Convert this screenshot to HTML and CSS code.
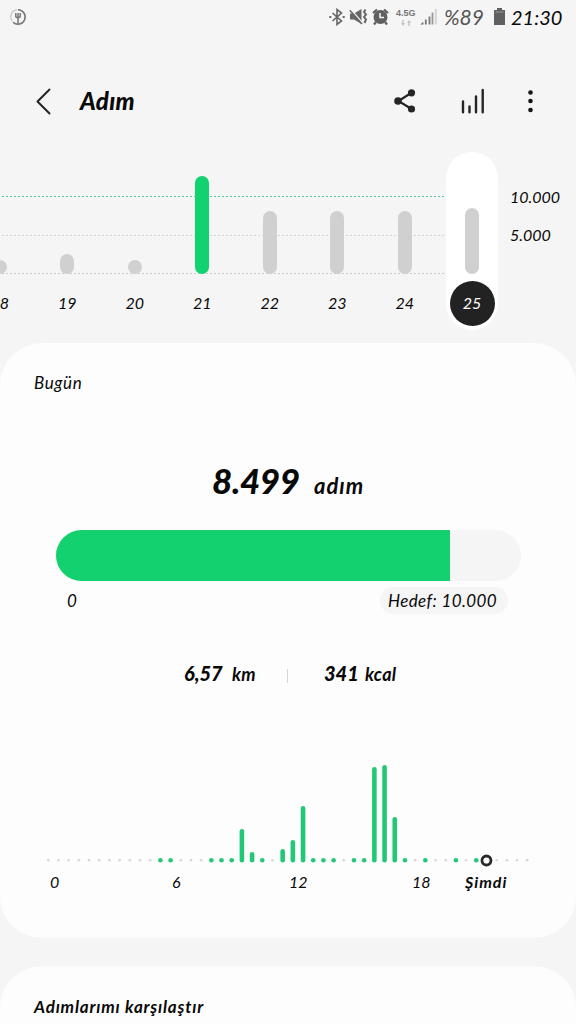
FILE: index.html
```html
<!DOCTYPE html>
<html lang="tr">
<head>
  <meta charset="utf-8">
  <title>Adım</title>
  <link rel="stylesheet" href="styles.css">
</head>
<body>
  <div class="status-bar">
    <svg class="fork-icon" width="18" height="18" viewBox="0 0 18 18" fill="none">
      <path d="M8 1.800A7.200 7.200 0 0 0 3 13" stroke="#ccc" stroke-width="1.500"/>
      <path d="M9 1.800A7.200 7.200 0 1 1 4 14.200" stroke="#777" stroke-width="1.500"/>
      <path d="M6.800 5v3.500q0 1.200 2.200 1.200t2.200-1.200V5M9 5v11" stroke="#777" stroke-width="1.500"/>
    </svg>
    <div class="status-right">
      <svg class="bluetooth" width="16" height="18" viewBox="0 0 16 18" fill="none" stroke="#666" stroke-width="1.600">
        <path d="M3.500 5l9 8L8 16.500v-15L12.500 5l-9 8"/>
        <path d="M.3 9h2M13.700 9h2" stroke-width="2"/>
      </svg>
      <svg class="mute" width="19" height="18" viewBox="0 0 19 18">
        <path d="M1 5.500h4L12.500 1v15L5 11.500H1z" fill="#666"/>
        <path d="M2 1.500L14 15.500" stroke="#f5f5f5" stroke-width="1.400"/>
        <path d="M.8 2.300L13 16" stroke="#666" stroke-width="1.500"/>
        <path d="M16.500 1.500l-1.500 2.500 2 2.500-2 2.500 2 2.500-1.500 3.500" fill="none" stroke="#666" stroke-width="2"/>
      </svg>
      <svg class="alarm" width="17" height="18" viewBox="0 0 17 18">
        <circle cx="8.500" cy="9" r="7" fill="#606060"/>
        <path d="M1 5L5 1.500M16 5l-4-3.500M4 14l-2 2.500M13 14l2 2.500" stroke="#606060" stroke-width="2.200"/>
        <path d="M8 5v4.500h4" fill="none" stroke="#f5f5f5" stroke-width="1.500"/>
      </svg>
      <div class="network">
        <span>4.5G</span>
        <svg width="10" height="6" viewBox="0 0 10 6"><path d="M0 3h4L2 6zM6 3h4L8 0zM1.300 0h1.400v3H1.300zM7.300 3h1.400v3H7.300z" fill="#c4c4c4"/></svg>
      </div>
      <svg class="signal" width="17" height="18" viewBox="0 0 17 18" stroke-width="1.800">
        <path d="M.5 16.500h2.800v-2.800z" fill="#666"/>
        <path d="M5.800 16.500v-5M9.500 16.500V8.500" stroke="#777"/>
        <path d="M12.500 16.500V4.500" stroke="#999"/>
        <path d="M15.800 16.500V1" stroke="#d2d2d2"/>
      </svg>
      <span class="battery-text">%89</span>
      <svg class="battery" width="11" height="17" viewBox="0 0 11 17">
        <path d="M3 0h5v2h3v15H0V2h3z" fill="#606060"/>
        <path d="M1.500 4h8" stroke="#999"/>
      </svg>
      <span class="clock">21:30</span>
    </div>
  </div>

  <header class="header">
    <svg class="back" width="15" height="27" viewBox="0 0 15 27" fill="none" stroke="#222" stroke-width="1.900" stroke-linecap="round" stroke-linejoin="round">
      <path d="M13.500 1.500L1.500 13.500l12 12"/>
    </svg>
    <h1>Adım</h1>
    <svg class="share" width="22" height="24" viewBox="0 0 22 24" fill="#252525">
      <path d="M17.500 3.800L4.500 12l13 8" fill="none" stroke="#252525" stroke-width="2.200"/>
      <circle cx="17.500" cy="3.800" r="3.600"/><circle cx="4" cy="12" r="3.800"/><circle cx="17.500" cy="20" r="3.600"/>
    </svg>
    <svg class="stats" width="25" height="26" viewBox="0 0 25 26" stroke="#252525" stroke-width="2.400" stroke-linecap="round">
      <path d="M2 13.500v10.800M8.500 18.500v5.800M15 8.500v15.800M21.700 2v22.300"/>
    </svg>
    <svg class="more" width="6" height="24" viewBox="0 0 6 24" fill="#151515">
      <circle cx="2.500" cy="3.500" r="2.300"/><circle cx="2.500" cy="12" r="2.300"/><circle cx="2.500" cy="21" r="2.300"/>
    </svg>
  </header>

  <section class="week">
    <div class="days" id="days"></div>
    <div class="scale"><span>10.000</span><span>5.000</span></div>
  </section>

  <section class="card today">
    <h2>Bugün</h2>
    <div class="total"><strong>8.499</strong><span>adım</span></div>
    <div class="progress"><div class="progress-fill"></div></div>
    <div class="goal-row"><span class="zero">0</span><span class="goal">Hedef: 10.000</span></div>
    <div class="details">
      <div class="distance"><b>6,57</b><span>km</span></div>
      <div class="divider"></div>
      <div class="calories"><b>341</b><span>kcal</span></div>
    </div>
    <div class="hours" id="hours"></div>
    <div class="hour-labels"><span>0</span><span>6</span><span>12</span><span>18</span><b>Şimdi</b></div>
  </section>

  <section class="card compare">
    <h2>Adımlarımı karşılaştır</h2>
  </section>

  <script>
    // day, bar height in px
    const days = [[18, 14], [19, 20], [20, 14], [21, 98], [22, 63], [23, 63], [24, 63], [25, 66]];
    document.getElementById('days').innerHTML = days.map(([day, height]) => {
      const state = day === 21 ? ' reached' : day === 25 ? ' selected' : '';
      return `<div class="day${state}"><div class="day-plot"><div class="day-bar" style="height:${height}px"></div></div><span class="day-label">${day}</span></div>`;
    }).join('');

    // one slot per half hour
    const steps = {
      11: 4, 12: 4, 16: 4, 17: 4, 18: 4, 19: 33, 20: 10, 21: 4, 23: 13, 24: 22, 25: 56,
      26: 4, 27: 4, 28: 4, 30: 4, 31: 4, 32: 95, 33: 97, 34: 45, 35: 4, 37: 4, 40: 4, 42: 4
    };
    const now = 43;
    let slots = '';
    for (let i = 0; i < 48; i++) {
      const x = 5.3 + i * 10.19;
      if (i === now) {
        slots += `<circle class="now" cx="${x}" cy="95.5" r="4.5"/>`;
      } else if (steps[i]) {
        slots += `<rect class="hour-bar" x="${x - 2.3}" y="${97 - steps[i]}" width="4.6" height="${steps[i] + 0.6}" rx="2.3"/>`;
      } else {
        slots += `<circle class="empty" cx="${x}" cy="95.2" r="1.3"/>`;
      }
    }
    document.getElementById('hours').innerHTML = `<svg width="490" height="102">${slots}</svg>`;
  </script>
</body>
</html>
```
FILE: styles.css
```css
* {
  box-sizing: border-box;
}
body {
  margin: 0;
  width: 576px;
  height: 1024px;
  overflow: hidden;
  background-color: #f5f5f5;
  color: #090909;
  font-family: Lato, "Open Sans", sans-serif;
  font-style: italic;
  font-variant-ligatures: none;
}
h1, h2 {
  margin: 0;
}
svg {
  display: block;
  flex: none;
}
.status-bar {
  display: flex;
  justify-content: space-between;
  height: 34px;
  padding: 8px 13px 0 9px;
}
.status-right {
  display: flex;
  height: 18px;
}
.bluetooth {
  margin-left: -2px;
}
.mute {
  margin-left: 4px;
}
.alarm {
  margin-left: 4px;
}
.network {
  width: 20px;
  margin-left: 7px;
  font: bold 9px/11px "Liberation Sans", sans-serif;
  color: #777;
}
.network svg {
  margin: 1px 0 0 5px;
}
.signal {
  margin-left: 4px;
}
.battery-text {
  width: 41px;
  margin-left: 7px;
  font-size: 21px;
  line-height: 18px;
  color: #555;
}
.battery {
  margin-left: 9px;
}
.clock {
  width: 52px;
  margin-left: 6px;
  font-size: 20px;
  line-height: 18px;
  white-space: nowrap;
}
.header {
  display: flex;
  align-items: center;
  height: 60px;
  margin-top: 37px;
  padding-left: 36px;
}
.header h1 {
  width: 314px;
  margin: -1px 0 0 29px;
  font-size: 24px;
  line-height: 28px;
  font-weight: 900;
  letter-spacing: 0.3px;
}
.stats {
  margin-left: 45px;
}
.more {
  margin-left: 42px;
}
.week {
  display: flex;
  height: 178px;
  margin-top: 21px;
}
.days {
  display: flex;
  width: 506px;
  margin-left: -34px;
  background-image:
    repeating-linear-gradient(90deg, #5cc698 0 2px, transparent 2px 4px),
    repeating-linear-gradient(90deg, #d3d3d3 0 2px, transparent 2px 4px),
    repeating-linear-gradient(90deg, #c4cec9 0 2px, transparent 2px 4px);
  background-size: 480px 1px;
  background-position: 0 44px, 0 83px, 0 121px;
  background-repeat: no-repeat;
}
.day {
  flex: none;
  width: 67.5px;
  display: flex;
  flex-direction: column;
  align-items: center;
}
.day-plot {
  display: flex;
  align-items: flex-end;
  height: 122px;
}
.day-bar {
  width: 14px;
  border-radius: 7px;
  background-color: #d0d0d0;
}
.reached .day-bar {
  background-color: #11d170;
}
.day-label {
  width: 45px;
  height: 45px;
  margin-top: 7px;
  border-radius: 50%;
  font-size: 16px;
  line-height: 44px;
  text-align: center;
}
.selected {
  width: 52px;
  margin-left: 7.5px;
  border-radius: 26px;
  background-color: #fff;
}
.selected .day-label {
  background-color: #222;
  color: #fff;
}
.scale {
  display: flex;
  flex-direction: column;
  gap: 18px;
  width: 60px;
  margin-left: 38px;
  padding-top: 35px;
  font-size: 16px;
  line-height: 20px;
}
.card {
  border-radius: 42px;
  background-color: #fdfdfd;
}
.card h2 {
  padding-left: 34px;
  line-height: 22px;
}
.today {
  height: 595px;
  margin-top: 13px;
  padding-top: 29px;
}
.today h2 {
  font-size: 17px;
  font-weight: 400;
  letter-spacing: 0.6px;
}
.total {
  display: flex;
  align-items: baseline;
  height: 54px;
  margin-top: 59px;
  padding-left: 212px;
}
.total strong {
  width: 102px;
  font-size: 35px;
  line-height: 54px;
  font-weight: 900;
  letter-spacing: -0.4px;
}
.total span {
  font-size: 22px;
  font-weight: 700;
  letter-spacing: 1px;
}
.progress {
  width: 465px;
  height: 51px;
  margin: 23px 0 0 56px;
  overflow: hidden;
  border-radius: 26px;
  background-color: #f5f5f5;
}
.progress-fill {
  width: 394px;
  height: 100%;
  background-color: #12d16e;
}
.goal-row {
  display: flex;
  justify-content: space-between;
  margin-top: 6px;
  padding: 0 68px 0 67px;
  font-size: 17px;
  line-height: 27px;
}
.goal {
  width: 128px;
  padding-right: 3px;
  border-radius: 14px;
  background-color: #f5f5f5;
  text-align: center;
  letter-spacing: 0.4px;
}
.details {
  display: flex;
  align-items: center;
  height: 28px;
  margin-top: 45px;
}
.distance, .calories {
  display: flex;
  align-items: baseline;
  white-space: nowrap;
}
.distance {
  width: 103px;
  margin-left: 184px;
}
.calories {
  margin-left: 36px;
}
.details b {
  width: 41px;
  font-size: 20px;
  font-weight: 900;
}
.distance b {
  width: 48px;
}
.details span {
  font-size: 18px;
  font-weight: 700;
  letter-spacing: 0.3px;
}
.divider {
  width: 1px;
  height: 14px;
  margin-top: 5px;
  background-color: #d5d5d5;
}
.hours {
  height: 102px;
  margin: 78px 0 0 43px;
}
.hour-bar {
  fill: #23c877;
}
.empty {
  fill: #d6d6d6;
}
.now {
  fill: #fff;
  stroke: #292929;
  stroke-width: 2.8px;
}
.hour-labels {
  display: grid;
  grid-template-columns: 122px 117px 123px 53px auto;
  margin: 4px 0 0 50px;
  font-size: 16px;
  line-height: 22px;
}
.hour-labels b {
  letter-spacing: 1px;
}
.compare {
  height: 58px;
  margin-top: 28px;
  padding-top: 30px;
  border-radius: 42px 42px 0 0;
}
.compare h2 {
  font-size: 17px;
  letter-spacing: 0.8px;
}
```
